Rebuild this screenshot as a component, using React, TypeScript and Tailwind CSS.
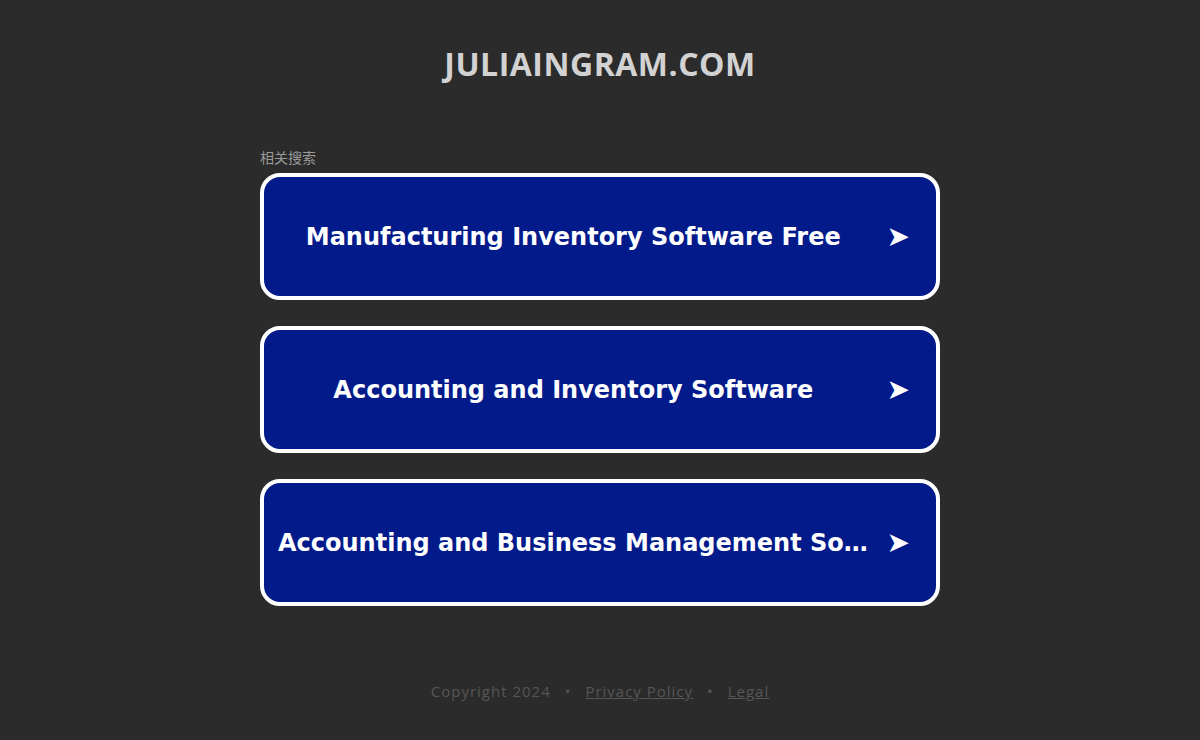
export default function App() {
  const links = [
    "Manufacturing Inventory Software Free",
    "Accounting and Inventory Software",
    "Accounting and Business Management Software",
  ];

  return (
    <div className="flex min-h-[740px] w-full flex-col items-center bg-[#2b2b2b] font-['Open_Sans',sans-serif]">
      <header className="pt-[42px]">
        <h1 className="text-[32px] font-bold leading-[44px] tracking-[0.5px] text-[#d2d2d2]">
          JULIAINGRAM.COM
        </h1>
      </header>

      <main className="mt-[62px] flex w-[680px] flex-col">
        <div className="font-['Noto_Sans_CJK_SC',sans-serif] text-[14px] leading-[18px] text-[#9a9a9a]">
          相关搜索
        </div>
        <div className="mt-[7px] flex flex-col gap-[26px]">
          {links.map((t) => (
            <a
              key={t}
              href="#"
              className="flex h-[127px] items-center rounded-[20px] border-[4px] border-white bg-[#021a8a] pl-[14px] pr-[26px] text-white"
            >
              <span className="min-w-0 flex-1 truncate text-center font-['DejaVu_Sans',sans-serif] text-[24px] font-bold">
                {t}
              </span>
              <span className="ml-[18px] font-['DejaVu_Sans',sans-serif] text-[28px] leading-none">
                ➤
              </span>
            </a>
          ))}
        </div>
      </main>

      <footer className="mt-[74px] flex items-center gap-[14px] text-[15px] tracking-[1px] text-[#565656]">
        <span>Copyright 2024</span>
        <span>•</span>
        <a href="#" className="underline">
          Privacy Policy
        </a>
        <span>•</span>
        <a href="#" className="underline">
          Legal
        </a>
      </footer>
    </div>
  );
}
